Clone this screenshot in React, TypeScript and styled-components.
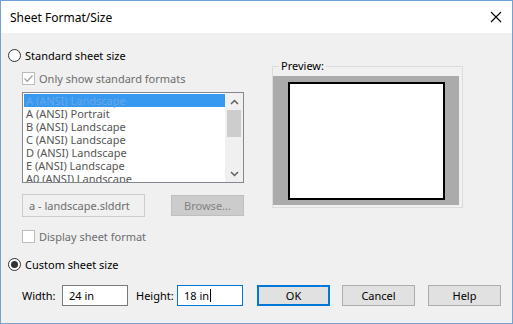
import React from "react";
import styled, { createGlobalStyle } from "styled-components";

const GlobalStyle = createGlobalStyle`
  html, body {
    margin: 0;
    padding: 0;
    background: #ffffff;
  }
  body {
    font-family: "Noto Sans", "Liberation Sans", sans-serif;
    font-size: 11px;
  }
  * {
    box-sizing: border-box;
  }
`;

const StyledWindow = styled.div`
  width: 513px;
  height: 324px;
  border: 1px solid #6fa3d3;
  display: flex;
  flex-direction: column;
  background: #f0f0f0;
  color: #000;
`;

const StyledTitleBar = styled.div`
  height: 32px;
  background: #ffffff;
  display: flex;
  align-items: center;
  justify-content: space-between;
  padding: 0 10px 0 9px;
  font-size: 12px;
`;

const StyledBody = styled.div`
  flex: 1;
  display: flex;
  flex-direction: column;
  padding: 16px 10px 0 7px;
`;

const StyledTop = styled.div`
  display: flex;
  align-items: flex-start;
`;

const StyledLeftCol = styled.div`
  width: 236px;
  display: flex;
  flex-direction: column;
`;

const StyledOptionRow = styled.label<{ $indent?: number; $top?: number; $disabled?: boolean }>`
  height: 13px;
  display: flex;
  align-items: center;
  gap: 4px;
  margin-left: ${(p) => p.$indent ?? 0}px;
  margin-top: ${(p) => p.$top ?? 0}px;
  color: ${(p) => (p.$disabled ? "#6d6d6d" : "#000")};
  white-space: nowrap;
`;

const StyledRadio = styled.span<{ $checked?: boolean }>`
  width: 13px;
  height: 13px;
  border-radius: 50%;
  border: 1px solid #333;
  background: #fff;
  display: flex;
  align-items: center;
  justify-content: center;
  flex-shrink: 0;

  &::after {
    content: "";
    width: 7px;
    height: 7px;
    border-radius: 50%;
    background: ${(p) => (p.$checked ? "#333" : "transparent")};
  }
`;

const StyledCheck = styled.span`
  width: 13px;
  height: 13px;
  border: 1px solid #bcbcbc;
  background: #fff;
  display: flex;
  align-items: center;
  justify-content: center;
  flex-shrink: 0;
`;

const StyledList = styled.div`
  margin: 7px 0 0 14px;
  width: 222px;
  height: 91px;
  border: 1px solid #828790;
  background: #fff;
  display: flex;
  overflow: hidden;
`;

const StyledItems = styled.div`
  flex: 1;
  padding: 1px 0 0 1px;
`;

const StyledItem = styled.div<{ $selected?: boolean }>`
  height: 13px;
  line-height: 13px;
  padding-left: 2px;
  color: ${(p) => (p.$selected ? "#67a6e8" : "#555")};
  background: ${(p) => (p.$selected ? "#3799f0" : "transparent")};
  white-space: nowrap;
`;

const StyledScrollBar = styled.div`
  width: 18px;
  display: flex;
  flex-direction: column;
  align-items: center;
  background: #f0f0f0;
`;

const StyledArrow = styled.div`
  height: 17px;
  width: 100%;
  display: flex;
  align-items: center;
  justify-content: center;
`;

const StyledTrack = styled.div`
  flex: 1;
  width: 100%;
  padding: 0 2px;
`;

const StyledThumb = styled.div`
  height: 27px;
  background: #cdcdcd;
`;

const StyledFileRow = styled.div`
  margin: 11px 0 0 14px;
  display: flex;
  align-items: center;
  justify-content: space-between;
`;

const StyledField = styled.div<{ $width: number; $focused?: boolean; $disabled?: boolean }>`
  width: ${(p) => p.$width}px;
  height: ${(p) => (p.$disabled ? 23 : 21)}px;
  border: 1px solid ${(p) => (p.$focused ? "#0078d7" : p.$disabled ? "#cccccc" : "#7a7a7a")};
  background: ${(p) => (p.$disabled ? "#f0f0f0" : "#fff")};
  color: ${(p) => (p.$disabled ? "#6d6d6d" : "#000")};
  display: flex;
  align-items: center;
  padding-left: 6px;
  white-space: nowrap;
`;

const StyledCaret = styled.span`
  display: inline-block;
  width: 1px;
  height: 13px;
  background: #000;
  margin-left: 1px;
`;

const StyledButton = styled.div<{ $width: number; $default?: boolean; $disabled?: boolean; $left?: number }>`
  width: ${(p) => p.$width}px;
  height: 21px;
  margin-left: ${(p) => p.$left ?? 0}px;
  border: ${(p) => (p.$default ? "2px solid #0078d7" : p.$disabled ? "1px solid #bfbfbf" : "1px solid #adadad")};
  background: ${(p) => (p.$disabled ? "#cccccc" : "#e1e1e1")};
  color: ${(p) => (p.$disabled ? "#838383" : "#000")};
  display: flex;
  align-items: center;
  justify-content: center;
  flex-shrink: 0;
`;

const StyledPreview = styled.fieldset`
  margin: 10px 0 0 28px;
  padding: 3px 3px 2px 0;
  width: 191px;
  border: 1px solid #dcdcdc;
  min-width: 0;
`;

const StyledLegend = styled.legend`
  margin-left: 6px;
  padding: 0 2px;
  line-height: 14px;
  font-size: 11px;
`;

const StyledPaperArea = styled.div`
  height: 129px;
  background: #ababab;
  padding: 6px 0 0 15px;
`;

const StyledPaper = styled.div`
  width: 157px;
  height: 118px;
  background: #fff;
  border: 2px solid #000;
`;

const StyledSizeRow = styled.div`
  margin: 14px 0 0 14px;
  display: flex;
  align-items: center;
`;

const StyledLabel = styled.span<{ $width: number; $left?: number }>`
  width: ${(p) => p.$width}px;
  margin-left: ${(p) => p.$left ?? 0}px;
  flex-shrink: 0;
`;

const CloseIcon = () => (
  <svg width="12" height="12" viewBox="0 0 12 12">
    <path d="M1 1 L11 11 M11 1 L1 11" stroke="#000" strokeWidth="1.1" fill="none" />
  </svg>
);

const CheckMark = () => (
  <svg width="11" height="11" viewBox="0 0 11 11">
    <path d="M1.5 5.5 L4.2 8.2 L9.5 2.5" stroke="#a3a3a3" strokeWidth="1.3" fill="none" />
  </svg>
);

const Chevron = ({ up }: { up?: boolean }) => (
  <svg width="9" height="6" viewBox="0 0 9 6">
    <path d={up ? "M1 5 L4.5 1.5 L8 5" : "M1 1 L4.5 4.5 L8 1"} stroke="#606060" strokeWidth="1.5" fill="none" />
  </svg>
);

const formats = [
  "A (ANSI) Landscape",
  "A (ANSI) Portrait",
  "B (ANSI) Landscape",
  "C (ANSI) Landscape",
  "D (ANSI) Landscape",
  "E (ANSI) Landscape",
  "A0 (ANSI) Landscape",
];

const App: React.FC = () => {
  return (
    <StyledWindow>
      <GlobalStyle />
      <StyledTitleBar>
        <span>Sheet Format/Size</span>
        <CloseIcon />
      </StyledTitleBar>
      <StyledBody>
        <StyledTop>
          <StyledLeftCol>
            <StyledOptionRow>
              <StyledRadio />
              Standard sheet size
            </StyledOptionRow>
            <StyledOptionRow $indent={14} $top={10} $disabled>
              <StyledCheck>
                <CheckMark />
              </StyledCheck>
              Only show standard formats
            </StyledOptionRow>
            <StyledList>
              <StyledItems>
                {formats.map((f, i) => (
                  <StyledItem key={f} $selected={i === 0}>
                    {f}
                  </StyledItem>
                ))}
              </StyledItems>
              <StyledScrollBar>
                <StyledArrow>
                  <Chevron up />
                </StyledArrow>
                <StyledTrack>
                  <StyledThumb />
                </StyledTrack>
                <StyledArrow>
                  <Chevron />
                </StyledArrow>
              </StyledScrollBar>
            </StyledList>
            <StyledFileRow>
              <StyledField $width={123} $disabled>
                a - landscape.slddrt
              </StyledField>
              <StyledButton $width={73} $disabled>
                Browse...
              </StyledButton>
            </StyledFileRow>
            <StyledOptionRow $indent={14} $top={13} $disabled>
              <StyledCheck />
              Display sheet format
            </StyledOptionRow>
          </StyledLeftCol>
          <StyledPreview>
            <StyledLegend>Preview:</StyledLegend>
            <StyledPaperArea>
              <StyledPaper />
            </StyledPaperArea>
          </StyledPreview>
        </StyledTop>
        <StyledOptionRow $top={15}>
          <StyledRadio $checked />
          Custom sheet size
        </StyledOptionRow>
        <StyledSizeRow>
          <StyledLabel $width={40}>Width:</StyledLabel>
          <StyledField $width={66}>24 in</StyledField>
          <StyledLabel $width={41} $left={8}>
            Height:
          </StyledLabel>
          <StyledField $width={66} $focused>
            18 in
            <StyledCaret />
          </StyledField>
          <StyledButton $width={73} $left={14} $default>
            OK
          </StyledButton>
          <StyledButton $width={73} $left={12}>
            Cancel
          </StyledButton>
          <StyledButton $width={73} $left={13}>
            Help
          </StyledButton>
        </StyledSizeRow>
      </StyledBody>
    </StyledWindow>
  );
};

export default App;
